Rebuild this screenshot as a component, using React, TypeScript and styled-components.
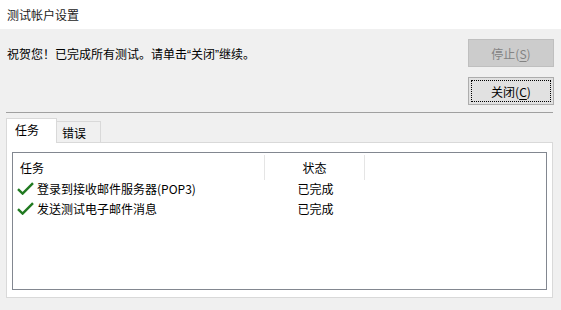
import styled, { createGlobalStyle } from 'styled-components';

const rows = [
  { id: 1, task: '登录到接收邮件服务器(POP3)', status: '已完成' },
  { id: 2, task: '发送测试电子邮件消息', status: '已完成' },
];

function CheckIcon() {
  return (
    <svg width="17" height="13" viewBox="0 0 17 13">
      <path d="M1 7.2 L5.6 11.6 L16 1.2" fill="none" stroke="#217a21" strokeWidth="2.4" />
    </svg>
  );
}

function App() {
  return (
    <>
      <GlobalStyle />
      <Window>
        <TitleBar>测试帐户设置</TitleBar>
        <Body>
          <TopArea>
            <Message>
              祝贺您！已完成所有测试。请单击<Quote>“</Quote>关闭<Quote>”</Quote>继续。
            </Message>
            <Buttons>
              <Button type="button" disabled>
                停止(<u>S</u>)
              </Button>
              <Button type="button" $focused>
                关闭(<u>C</u>)
              </Button>
            </Buttons>
          </TopArea>
          <Separator />
          <Tabs>
            <Tab $active>任务</Tab>
            <Tab>错误</Tab>
          </Tabs>
          <Panel>
            <ListView>
              <HeaderRow>
                <HeaderCell>任务</HeaderCell>
                <HeaderCell $center>状态</HeaderCell>
                <HeaderRest />
              </HeaderRow>
              {rows.map((row) => (
                <Row key={row.id}>
                  <TaskCell>
                    <CheckIcon />
                    <span>{row.task}</span>
                  </TaskCell>
                  <StatusCell>{row.status}</StatusCell>
                </Row>
              ))}
            </ListView>
          </Panel>
        </Body>
      </Window>
    </>
  );
}

export default App;

const GlobalStyle = createGlobalStyle`
  body {
    margin: 0;
    background: #f0f0f0;
    font-family: "Noto Sans CJK SC", "Noto Sans", sans-serif;
    font-size: 12px;
    color: #000000;
  }
`;

const Window = styled.div`
  width: 561px;
  height: 310px;
  background: #f0f0f0;
  display: flex;
  flex-direction: column;
`;

const TitleBar = styled.div`
  height: 29px;
  line-height: 29px;
  padding-left: 7px;
  background: #ffffff;
  color: #1a1a1a;
`;

const Body = styled.div`
  padding: 0 8px 0 6px;
  display: flex;
  flex-direction: column;
`;

const TopArea = styled.div`
  display: flex;
  justify-content: space-between;
  align-items: flex-start;
  padding-top: 10px;
`;

const Message = styled.p`
  margin: 7px 0 0 1px;
  line-height: 16px;
`;

const Quote = styled.span`
  font-family: "Liberation Sans", sans-serif;
`;

const Buttons = styled.div`
  display: flex;
  flex-direction: column;
  gap: 10px;
  margin-right: -1px;
`;

const Button = styled.button<{ $focused?: boolean }>`
  position: relative;
  width: 86px;
  height: 28px;
  padding: 0;
  font: inherit;
  color: #000000;
  background: #e1e1e1;
  border: 1px solid #adadad;

  u {
    text-decoration-thickness: 1px;
    text-underline-offset: 2px;
  }

  &:disabled {
    background: #cccccc;
    border-color: #bfbfbf;
    color: #838383;
  }

  ${({ $focused }) =>
    $focused &&
    `
    &::after {
      content: '';
      position: absolute;
      inset: 2px;
      border: 1px dotted #000000;
    }
  `}
`;

const Separator = styled.div`
  margin-top: 7px;
  height: 1px;
  background: #a0a0a0;
`;

const Tabs = styled.div`
  display: flex;
  align-items: flex-end;
  margin-top: 5px;
  height: 25px;
  position: relative;
  z-index: 1;
  margin-bottom: -1px;
`;

const Tab = styled.div<{ $active?: boolean }>`
  box-sizing: border-box;
  height: ${({ $active }) => ($active ? '25px' : '22px')};
  width: ${({ $active }) => ($active ? '51px' : '45px')};
  padding-left: ${({ $active }) => ($active ? '8px' : '5px')};
  line-height: ${({ $active }) => ($active ? '22px' : '21px')};
  border: 1px solid #d9d9d9;
  border-bottom: ${({ $active }) => ($active ? 'none' : '1px solid #d9d9d9')};
  background: ${({ $active }) => ($active ? '#ffffff' : '#f0f0f0')};
  margin-left: ${({ $active }) => ($active ? '0' : '-1px')};
`;

const Panel = styled.div`
  box-sizing: border-box;
  height: 156px;
  background: #ffffff;
  border: 1px solid #d9d9d9;
  padding: 9px 5px 7px 5px;
  display: flex;
`;

const ListView = styled.div`
  flex: 1;
  border: 1px solid #828790;
  background: #ffffff;
`;

const HeaderRow = styled.div`
  display: grid;
  grid-template-columns: 252px 100px 1fr;
  height: 25px;
`;

const HeaderCell = styled.div<{ $center?: boolean }>`
  line-height: 25px;
  border-right: 1px solid #e5e5e5;
  padding-left: ${({ $center }) => ($center ? '0' : '7px')};
  text-align: ${({ $center }) => ($center ? 'center' : 'left')};
  margin-top: 2px;
`;

const HeaderRest = styled.div``;

const Row = styled.div`
  display: grid;
  grid-template-columns: 252px 100px;
  height: 20px;
  align-items: center;
`;

const TaskCell = styled.div`
  display: flex;
  align-items: center;
  gap: 3px;
  padding-left: 4px;

  svg {
    flex: none;
  }
`;

const StatusCell = styled.div`
  text-align: center;
  padding-left: 1px;
`;
